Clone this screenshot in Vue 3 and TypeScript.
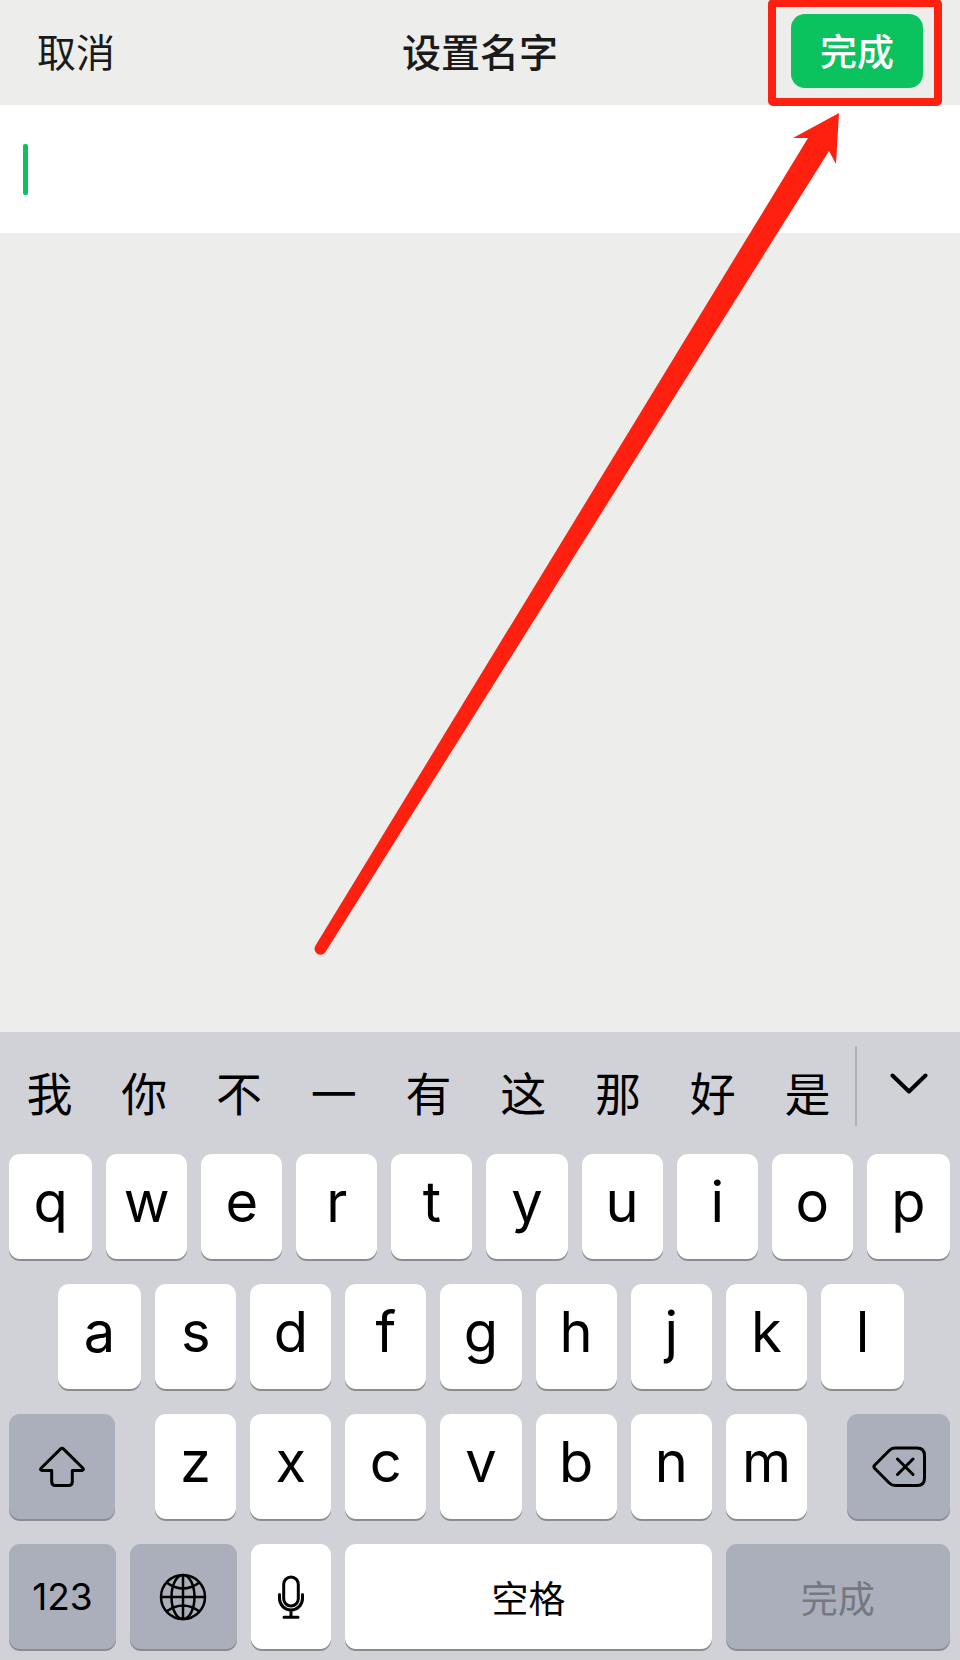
<script setup lang="ts">
import { ref } from 'vue'

const name = ref<string>('')
const candidates: string[] = ['我', '你', '不', '一', '有', '这', '那', '好', '是']
const topRow: string[] = [...'qwertyuiop']
const homeRow: string[] = [...'asdfghjkl']
const bottomRow: string[] = [...'zxcvbnm']

function type(text: string): void {
  name.value += text
}

function erase(): void {
  name.value = name.value.slice(0, -1)
}
</script>

<template>
  <div class="screen">
    <header class="bar">
      <button class="cancel" type="button">取消</button>
      <h1 class="title">设置名字</h1>
      <div class="confirm">
        <button class="done" type="button">完成</button>
      </div>
    </header>

    <label class="field">
      <span v-if="!name" class="caret"></span>
      <input v-model="name" class="name" type="text" aria-label="名字" />
    </label>

    <main class="blank"></main>

    <section class="keyboard">
      <div class="suggestions">
        <div class="candidates">
          <button v-for="c in candidates" :key="c" class="candidate" type="button" @click="type(c)">{{ c }}</button>
        </div>
        <button class="expand" type="button" aria-label="展开">
          <svg width="38" height="22" viewBox="0 0 38 22">
            <path d="M2.5 2.5 19 18.500 35.500 2.500" fill="none" stroke="#000" stroke-width="4" stroke-linecap="round" stroke-linejoin="round" />
          </svg>
        </button>
      </div>

      <div class="rows">
        <div class="row row-top">
          <button v-for="k in topRow" :key="k" class="key" type="button" @click="type(k)">{{ k }}</button>
        </div>
        <div class="row row-home">
          <button v-for="k in homeRow" :key="k" class="key" type="button" @click="type(k)">{{ k }}</button>
        </div>
        <div class="row row-bottom">
          <button class="key dark" type="button" aria-label="切换大写">
            <svg width="48" height="42" viewBox="0 0 48 42">
              <path d="M22.600 2.900Q24 1.500 25.400 2.900L45 22.200Q46.300 24.200 44 24.500H34.300V35.500Q34.300 39.500 30.300 39.500H17.700Q13.700 39.500 13.700 35.500V24.500H4Q1.700 24.200 3 22.200Z" fill="none" stroke="#000" stroke-width="3" stroke-linejoin="round" />
            </svg>
          </button>
          <div class="letters">
            <button v-for="k in bottomRow" :key="k" class="key" type="button" @click="type(k)">{{ k }}</button>
          </div>
          <button class="key dark" type="button" aria-label="删除" @click="erase">
            <svg width="54" height="42" viewBox="0 0 54 42">
              <path d="M2.600 19.200 17 4.700Q19.600 2 23 2H45Q52.500 2 52.500 9.500V32Q52.500 39.500 45 39.500H23Q19.600 39.500 17 36.800L2.600 22.300Q1.200 20.750 2.600 19.200ZM25.500 13 41 28.500M41 13 25.500 28.500" fill="none" stroke="#000" stroke-width="3" stroke-linecap="round" stroke-linejoin="round" />
            </svg>
          </button>
        </div>
        <div class="row row-space">
          <button class="key dark digits" type="button">123</button>
          <button class="key dark" type="button" aria-label="切换输入法">
            <svg width="48" height="48" viewBox="-24 -24 48 48">
              <g fill="none" stroke="#000" stroke-width="2.500">
                <circle r="22" />
                <ellipse rx="11.500" ry="22" />
                <path d="M0-22V22M-22 0H22M-16.500-14.500Q0-2.500 16.500-14.500M-16.500 14.500Q0 2.500 16.500 14.500" />
              </g>
            </svg>
          </button>
          <button class="key" type="button" aria-label="语音输入">
            <svg width="26" height="44" viewBox="0 0 26 44">
              <g fill="none" stroke="#000" stroke-width="3" stroke-linecap="round">
                <rect x="5.700" y="2" width="14.600" height="29" rx="7.300" />
                <path d="M1.500 19.500V23.500A11.500 11.500 0 0 0 24.500 23.500V19.500M13 35V42M6 42.300H20" />
              </g>
            </svg>
          </button>
          <button class="key word" type="button" @click="type(' ')">空格</button>
          <button class="key dark word" type="button" disabled>完成</button>
        </div>
      </div>
    </section>

    <svg class="arrow" viewBox="0 0 960 1660" aria-hidden="true">
      <path d="M839 113 793 138 808 138 315.500 945.500A5.900 5.900 0 0 0 325.500 952L829 151 836 164Z" fill="#ff2010" />
    </svg>
  </div>
</template>

<style>
body {
  margin: 0;
  background: #ededeb;
}
</style>

<style scoped>
.screen {
  position: relative;
  display: flex;
  flex-direction: column;
  min-height: 100vh;
  overflow: hidden;
  background: #ededeb;
  font-family: Inter, "Noto Sans CJK SC", sans-serif;
  color: #000;
}

button,
input {
  margin: 0;
  padding: 0;
  border: 0;
  background: none;
  font: inherit;
  color: inherit;
}

svg {
  display: block;
}

.bar {
  display: grid;
  grid-template-columns: 1fr auto 1fr;
  align-items: center;
  box-sizing: border-box;
  height: 105px;
  padding: 0 37px 6px;
  color: #1a1a1a;
}

.cancel {
  justify-self: start;
  font-size: 39px;
}

.title {
  margin: 0;
  font-size: 39px;
  font-weight: 500;
}

.confirm {
  position: relative;
  justify-self: end;
  margin-top: 3px;
}

.confirm::after {
  content: "";
  position: absolute;
  inset: -15px -19px -18px -23px;
  border: 8px solid #ff2010;
  border-radius: 5px;
  pointer-events: none;
}

.done {
  display: block;
  width: 132px;
  height: 74px;
  padding-bottom: 3px;
  border-radius: 14px;
  background: #0ac35f;
  color: #fff;
  font-size: 37px;
  font-weight: 500;
}

.field {
  display: flex;
  align-items: center;
  height: 128px;
  padding: 0 23px;
  background: #fff;
}

.caret {
  width: 5px;
  height: 51px;
  border-radius: 2px;
  background: #0ac35f;
}

.name {
  flex: 1;
  min-width: 0;
  height: 80px;
  outline: none;
  font-size: 39px;
  caret-color: #0ac35f;
}

.blank {
  flex: 1;
}

.keyboard {
  background: #d1d2d8;
}

.suggestions {
  display: grid;
  grid-template-columns: 855fr 105fr;
  height: 122px;
}

.candidates {
  display: grid;
  grid-template-columns: repeat(9, 1fr);
  padding-left: 2px;
}

.candidate {
  padding-bottom: 4px;
  font-size: 46px;
}

.expand {
  display: flex;
  justify-content: center;
  box-sizing: border-box;
  height: 80px;
  margin-top: 14px;
  padding-top: 27px;
  border-left: 2px solid #b0b1b6;
}

.rows {
  display: grid;
  gap: 25px;
  padding: 0 10px 11px 9px;
}

.row {
  display: grid;
  gap: 14px;
  height: 105px;
}

.row-top {
  grid-template-columns: 83fr repeat(8, 81fr) 83fr;
}

.row-home {
  grid-template-columns: 83fr repeat(7, 81fr) 83fr;
  padding: 0 46px 0 49px;
}

.row-bottom {
  grid-template-columns: 106fr 652fr 103fr;
  gap: 40px;
}

.row-space {
  grid-template-columns: 107fr 107fr 81fr 367fr 225fr;
}

.letters {
  display: grid;
  grid-template-columns: repeat(7, 1fr);
  gap: 14px;
}

.key {
  display: flex;
  align-items: center;
  justify-content: center;
  min-width: 0;
  padding-bottom: 10px;
  border-radius: 11px;
  background: #fff;
  box-shadow: 0 2px 0 #8b8c90;
  font-size: 56px;
  font-weight: 400;
  line-height: 64px;
}

.key:has(svg) {
  padding-bottom: 0;
}

.dark {
  background: #abafbb;
}

.digits {
  padding-bottom: 0;
  font-size: 37px;
}

.word {
  padding-top: 7px;
  padding-bottom: 0;
  font-size: 37px;
}

.key:disabled {
  color: #747881;
}

.arrow {
  position: absolute;
  top: 0;
  left: 0;
  width: 100%;
  pointer-events: none;
}
</style>
